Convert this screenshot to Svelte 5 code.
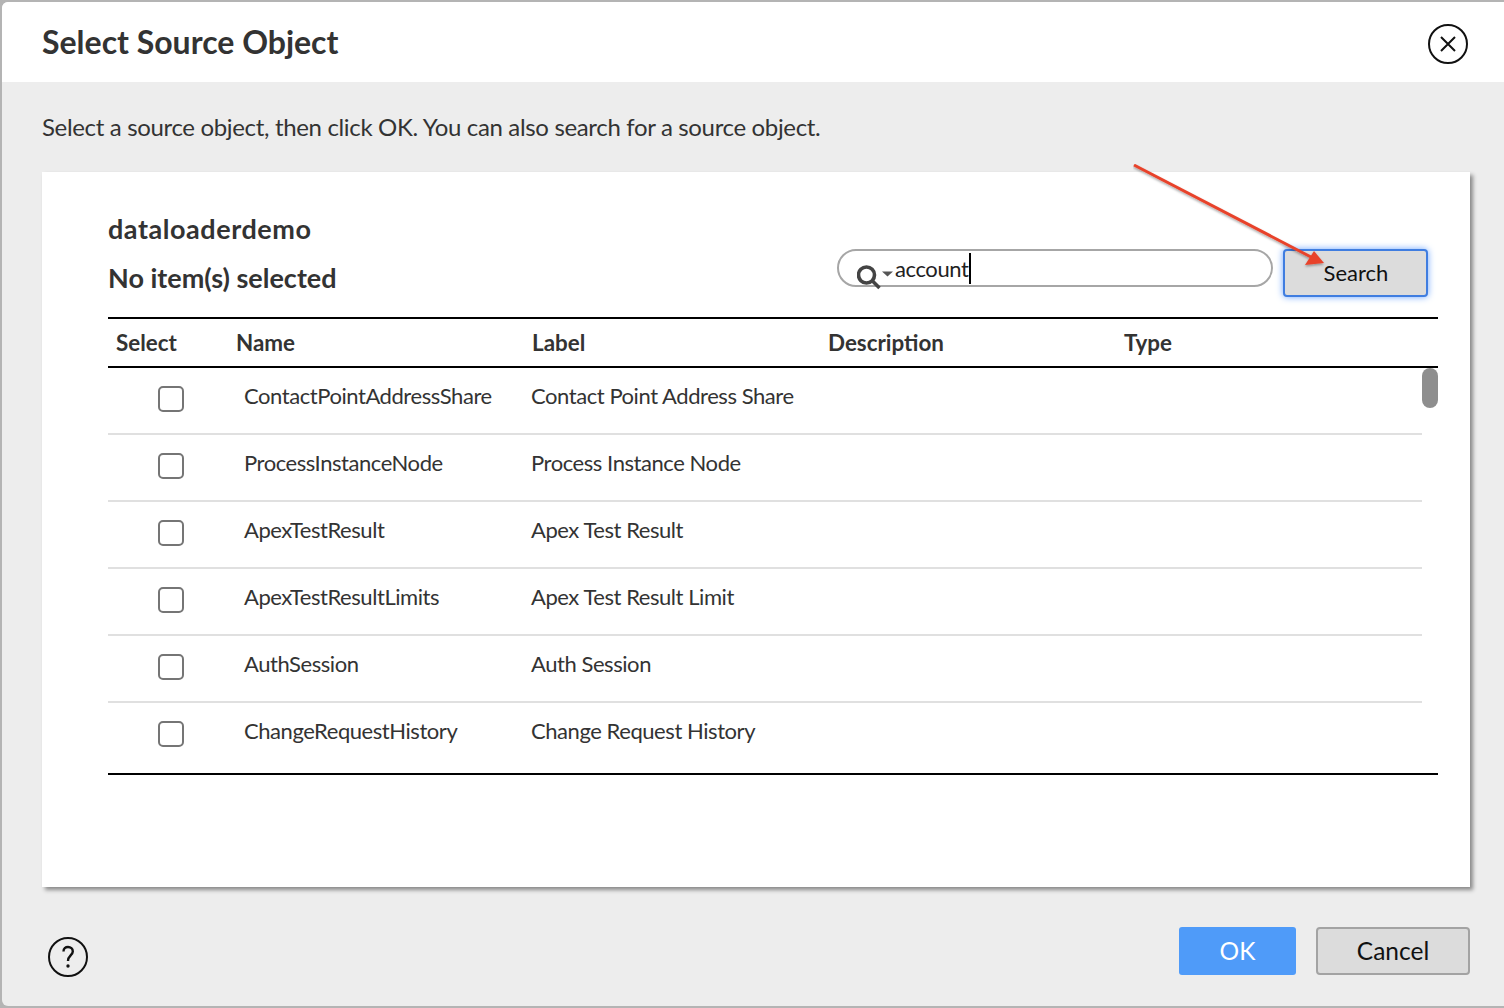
<script>
  const rows = [
    ['ContactPointAddressShare', 'Contact Point Address Share'],
    ['ProcessInstanceNode', 'Process Instance Node'],
    ['ApexTestResult', 'Apex Test Result'],
    ['ApexTestResultLimits', 'Apex Test Result Limit'],
    ['AuthSession', 'Auth Session'],
    ['ChangeRequestHistory', 'Change Request History']
  ];
</script>

<div class="backdrop">
  <div class="dialog">
    <header class="head">
      <h1>Select Source Object</h1>
      <button class="icon-btn close" aria-label="Close">
        <svg width="40" height="40" viewBox="0 0 40 40" fill="none" stroke="#111" stroke-width="2">
          <circle cx="20" cy="20" r="19" />
          <path d="M13 13 27 27M27 13 13 27" />
        </svg>
      </button>
    </header>

    <div class="content">
      <p class="intro">Select a source object, then click OK. You can also search for a source object.</p>

      <section class="panel">
        <div class="top">
          <div class="titles">
            <h2>dataloaderdemo</h2>
            <h3>No item(s) selected</h3>
          </div>
          <div class="search">
            <div class="field">
              <svg class="glass" width="36" height="28" viewBox="0 0 36 28">
                <circle cx="9.5" cy="10" r="8" fill="none" stroke="#444" stroke-width="3.6" />
                <path d="M15 15.5 22.5 23" stroke="#444" stroke-width="3.6" />
                <path d="M25 6.5H36L30.5 11.5Z" fill="#555" />
              </svg>
              <span class="typed">account</span><span class="caret"></span>
            </div>
            <button class="search-btn">Search</button>
          </div>
        </div>

        <div class="table">
          <div class="thead">
            <span>Select</span><span>Name</span><span>Label</span><span>Description</span><span>Type</span>
          </div>
          <div class="tbody">
            <div class="list">
              {#each rows as r}
                <div class="row">
                  <span class="cell-check"><span class="check"></span></span>
                  <span class="name">{r[0]}</span>
                  <span class="label">{r[1]}</span>
                </div>
              {/each}
            </div>
            <div class="track"><div class="thumb"></div></div>
          </div>
        </div>
      </section>

      <footer class="foot">
        <button class="icon-btn" aria-label="Help">
          <svg width="40" height="40" viewBox="0 0 40 40" fill="none" stroke="#111" stroke-width="2">
            <circle cx="20" cy="20" r="19" />
            <path d="M15.5 14.5C15.5 11.5 17.5 10 20 10C22.7 10 24.8 11.7 24.8 14.5C24.8 18 20 18.5 20 24" stroke-width="2.4" />
            <circle cx="20" cy="29" r="1.7" fill="#111" stroke="none" />
          </svg>
        </button>
        <div class="actions">
          <button class="ok">OK</button>
          <button class="cancel">Cancel</button>
        </div>
      </footer>
    </div>
  </div>

  <svg class="arrow" width="210" height="120" viewBox="0 0 210 120">
    <defs>
      <filter id="s" x="-10%" y="-10%" width="120%" height="130%">
        <feDropShadow dx="0" dy="1.5" stdDeviation="1" flood-color="#000" flood-opacity=".35" />
      </filter>
    </defs>
    <g filter="url(#s)">
      <path d="M1 1 178 93" stroke="#e8432b" stroke-width="3" />
      <path d="M191 99 172 101 181 87Z" fill="#e8432b" />
    </g>
  </svg>
</div>

<style>
  :global(body) {
    margin: 0;
    background: #b4b4b4;
  }
  * { box-sizing: border-box; }
  .backdrop {
    position: relative;
    width: 1504px;
    height: 1008px;
    padding: 2px 0 2px 2px;
    font-family: Lato, "Liberation Sans", sans-serif;
    color: #333;
    overflow: hidden;
  }
  .dialog {
    height: 100%;
    display: flex;
    flex-direction: column;
    background: #ededed;
    border-radius: 6px 0 0 6px;
    overflow: hidden;
  }
  button {
    font-family: inherit;
    margin: 0;
    padding: 0;
    cursor: pointer;
  }
  .icon-btn {
    display: block;
    border: 0;
    background: none;
    width: 40px;
    height: 40px;
  }
  .icon-btn svg { display: block; }
  .close { margin-top: 3px; }
  .head {
    height: 80px;
    flex: none;
    background: #fff;
    display: flex;
    align-items: center;
    justify-content: space-between;
    padding: 0 36px 0 40px;
  }
  h1 {
    margin: 0;
    font-size: 32px;
    font-weight: 700;
    line-height: 80px;
    height: 80px;
    color: #333;
  }
  .content {
    flex: 1;
    display: flex;
    flex-direction: column;
    padding: 0 34px 0 40px;
  }
  .intro {
    margin: 0;
    height: 90px;
    padding-top: 29px;
    line-height: 32px;
    font-size: 24px;
    letter-spacing: -0.34px;
    color: #333;
  }
  .panel {
    height: 715px;
    flex: none;
    background: #fff;
    box-shadow: 3px 3px 4px #8a8a8a;
    padding: 0 32px 0 66px;
  }
  .top {
    height: 145px;
    display: flex;
    justify-content: space-between;
    position: relative;
  }
  h2, h3 {
    margin: 0;
    font-size: 27px;
    font-weight: 700;
    line-height: 34px;
    color: #333;
  }
  h2 { padding-top: 40px; box-sizing: content-box; letter-spacing: 0.55px; }
  h3 { padding-top: 15px; box-sizing: content-box; }
  .search {
    display: flex;
    gap: 10px;
    padding-top: 77px;
    padding-right: 10px;
    height: 125px;
  }
  .field {
    width: 436px;
    height: 38px;
    border: 2px solid #a6a6a6;
    border-radius: 19px;
    background: #fff;
    display: flex;
    align-items: center;
    padding-left: 18px;
    position: relative;
  }
  .glass {
    flex: none;
    margin-top: 18px;
    margin-bottom: -4px;
    filter: blur(.5px);
  }
  .typed {
    font-size: 22px;
    letter-spacing: -0.4px;
    color: #222;
    line-height: 32px;
    margin: 2px 0 0 2px;
  }
  .caret {
    display: block;
    width: 2px;
    height: 31px;
    background: #000;
    margin-left: 0;
  }
  .search-btn {
    width: 145px;
    height: 48px;
    background: #dcdcdc;
    border: 2px solid #3f7de0;
    border-radius: 4px;
    box-shadow: 0 0 7px #6ea6ff;
    font-size: 22px;
    color: #111;
    padding: 0 0 2px 1px;
  }
  .table {
    width: 1330px;
    border-bottom: 2px solid #000;
    height: 458px;
  }
  .thead {
    height: 51px;
    border-top: 2px solid #000;
    border-bottom: 2px solid #000;
    display: grid;
    grid-template-columns: 128px 296px 296px 296px 1fr;
    align-items: center;
    font-size: 22.4px;
    font-weight: 700;
    color: #333;
  }
  .thead span:first-child { padding-left: 8px; }
  .tbody {
    display: flex;
  }
  .list { flex: 1; }
  .row {
    height: 67px;
    display: grid;
    grid-template-columns: 136px 287px 1fr;
    border-bottom: 2px solid #e0e0e0;
    font-size: 22px;
    letter-spacing: -0.44px;
    color: #333;
    line-height: 28px;
    padding-top: 14px;
  }
  .row:last-child { border-bottom: 0; }
  .cell-check {
    padding: 4px 0 0 50px;
  }
  .check {
    display: block;
    width: 26px;
    height: 26px;
    border: 2px solid #757575;
    border-radius: 5px;
    background: #fff;
  }
  .track {
    width: 16px;
    flex: none;
  }
  .thumb {
    height: 40px;
    background: #8e8e8e;
    border-radius: 8px;
  }
  .foot {
    flex: 1;
    display: flex;
    justify-content: space-between;
    padding: 40px 0 0 6px;
  }
  .foot .icon-btn { margin-top: 10px; }
  .actions {
    display: flex;
    gap: 20px;
    height: 48px;
  }
  .ok {
    width: 117px;
    height: 48px;
    background: #4f9bf9;
    border: 0;
    border-radius: 3px;
    color: #fff;
    font-size: 24.5px;
    padding-bottom: 2px;
  }
  .cancel {
    width: 154px;
    height: 48px;
    background: #dcdcdc;
    border: 2px solid #a3a3a3;
    border-radius: 4px;
    color: #111;
    font-size: 24.5px;
    padding-bottom: 2px;
  }
  .arrow {
    position: absolute;
    left: 1133px;
    top: 164px;
    pointer-events: none;
  }
</style>
